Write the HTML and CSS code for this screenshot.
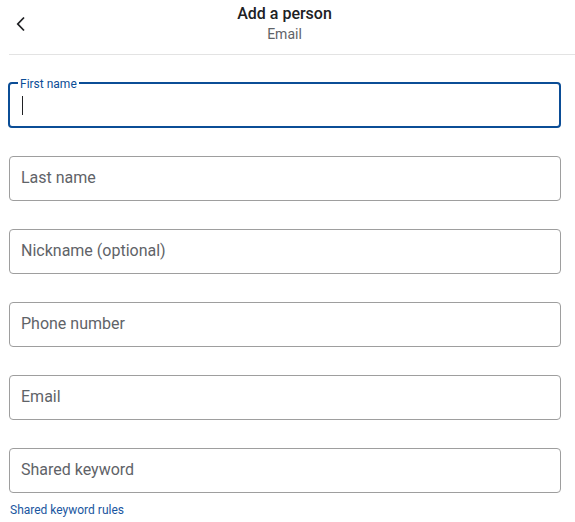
FILE: index.html
```
<!DOCTYPE html>
<html lang="en">
<head>
    <meta charset="UTF-8">
    <meta name="viewport" content="width=device-width, initial-scale=1.0">
    <title>Add a person</title>
    <link rel="stylesheet" href="styles.css">
</head>
<body>

    <div class="page">
        <div class="header">
            <button class="header__back" type="button" aria-label="Back">
                <svg width="10" height="16" viewBox="0 0 10 16">
                    <polyline points="8,1.5 1.8,8 8,14.5" fill="none" stroke="#202124" stroke-width="1.8"/>
                </svg>
            </button>
            <div class="header__titles">
                <p class="header__title">Add a person</p>
                <p class="header__subtitle">Email</p>
            </div>
        </div>

        <form class="form">
            <div class="field field--focused">
                <label class="field__label">First name</label>
                <span class="field__caret"></span>
                <input class="field__input" type="text">
            </div>
            <div class="field">
                <input class="field__input" type="text" placeholder="Last name">
            </div>
            <div class="field">
                <input class="field__input" type="text" placeholder="Nickname (optional)">
            </div>
            <div class="field">
                <input class="field__input" type="tel" placeholder="Phone number">
            </div>
            <div class="field">
                <input class="field__input" type="email" placeholder="Email">
            </div>
            <div class="field field--last">
                <input class="field__input" type="text" placeholder="Shared keyword">
            </div>
            <a class="form__link" href="#">Shared keyword rules</a>
        </form>
    </div>

</body>
</html>
```
FILE: styles.css
```
* {
    box-sizing: border-box;
}

body {
    margin: 0;
    font-family: Roboto, "Liberation Sans", sans-serif;
    color: #202124;
    background: #fff;
}

.page {
    padding-left: 9px;
}

.header {
    position: relative;
    height: 55px;
    border-bottom: 1px solid #e3e3e3;
    display: flex;
    justify-content: center;
}

.header__back {
    position: absolute;
    left: 6px;
    top: 16px;
    border: none;
    background: none;
    padding: 0;
    width: 12px;
    height: 16px;
    cursor: pointer;
}

.header__titles {
    text-align: center;
    padding-top: 4px;
    margin-left: -15px;
}

.header__title {
    margin: 0;
    font-size: 16px;
    font-weight: 500;
    line-height: 20px;
    color: #202124;
}

.header__subtitle {
    margin: 1px 0 0;
    font-size: 14px;
    line-height: 18px;
    color: #5f6368;
}

.form {
    padding: 27px 14px 0 0;
    display: flex;
    flex-direction: column;
}

.field {
    position: relative;
    height: 45px;
    border: 1px solid #9e9e9e;
    border-radius: 4px;
    margin-bottom: 28px;
    display: flex;
    align-items: center;
}

.field--focused {
    border: 2px solid #0b4d96;
    margin-left: -1px;
    height: 46px;
}

.field--last {
    margin-bottom: 10px;
}

.field__label {
    position: absolute;
    left: 8px;
    top: -7px;
    padding: 0 2px;
    background: #fff;
    font-size: 12px;
    line-height: 14px;
    color: #0b4d96;
}

.field__caret {
    position: absolute;
    left: 12px;
    top: 12px;
    width: 1px;
    height: 19px;
    background: #202124;
}

.field__input {
    width: 100%;
    height: 100%;
    border: none;
    outline: none;
    background: transparent;
    padding: 0 11px 2px;
    font-family: inherit;
    font-size: 16px;
    color: #202124;
}

.field__input::placeholder {
    color: #5f6368;
    opacity: 1;
}

.form__link {
    font-size: 12px;
    line-height: 14px;
    color: #1a56a0;
    text-decoration: none;
    padding-left: 1px;
}
```
